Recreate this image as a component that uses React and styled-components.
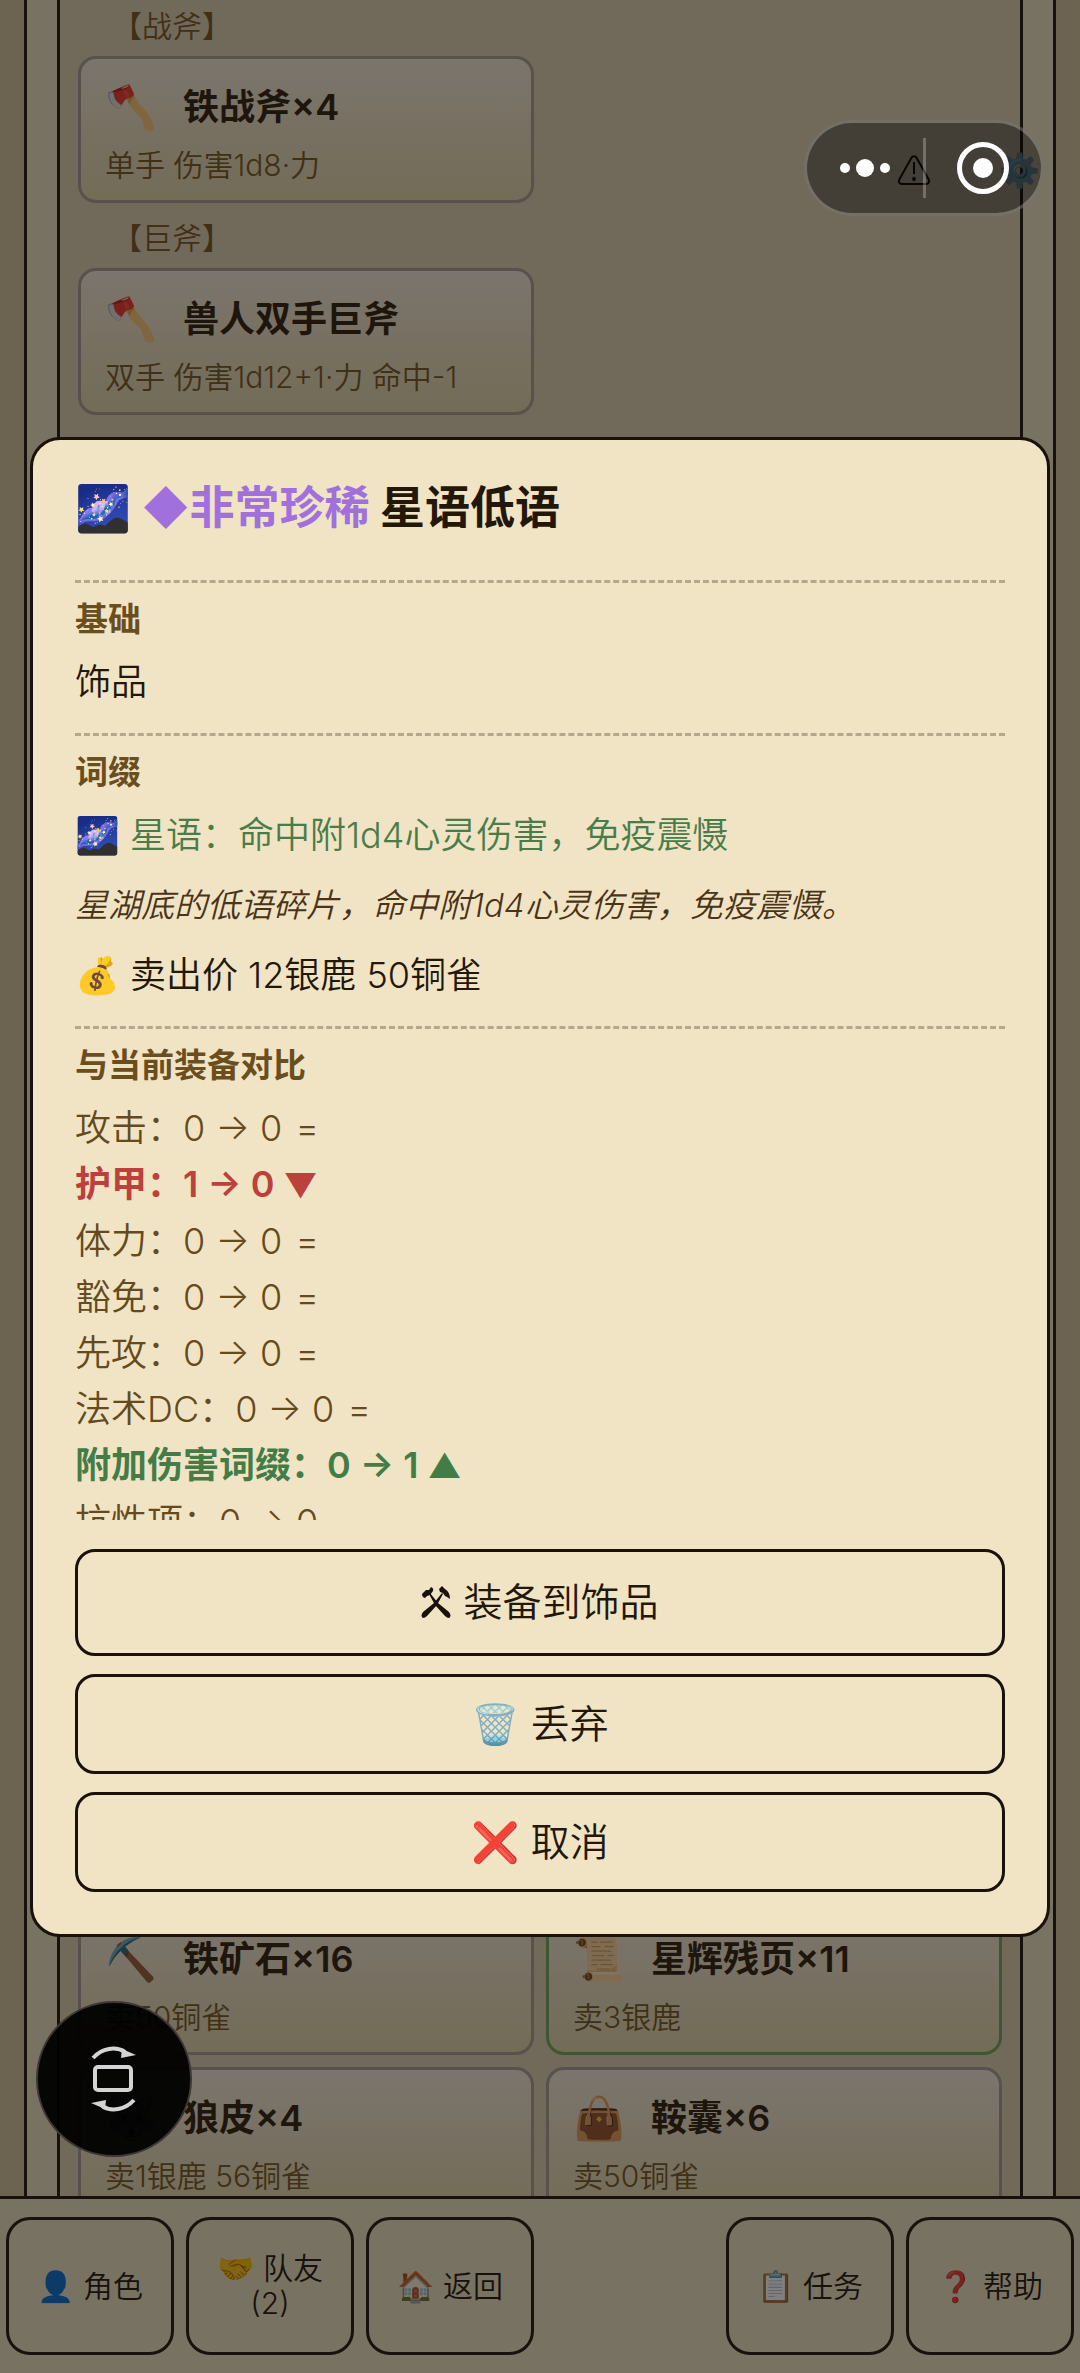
import React from 'react';
import styled, { createGlobalStyle } from 'styled-components';

const cards = [
  { label: '【战斧】', icon: '🪓', name: '铁战斧×4', desc: '单手 伤害1d8·力' },
  { label: '【巨斧】', icon: '🪓', name: '兽人双手巨斧', desc: '双手 伤害1d12+1·力 命中-1' },
];

const materials = [
  { icon: '⛏️', name: '铁矿石×16', desc: '卖50铜雀' },
  { icon: '📜', name: '星辉残页×11', desc: '卖3银鹿', rarity: 'fine' },
  { icon: '🐺', name: '狼皮×4', desc: '卖1银鹿 56铜雀' },
  { icon: '👜', name: '鞍囊×6', desc: '卖50铜雀' },
];

const compare = [
  { name: '攻击', from: 0, to: 0 },
  { name: '护甲', from: 1, to: 0 },
  { name: '体力', from: 0, to: 0 },
  { name: '豁免', from: 0, to: 0 },
  { name: '先攻', from: 0, to: 0 },
  { name: '法术DC', from: 0, to: 0 },
  { name: '附加伤害词缀', from: 0, to: 1 },
  { name: '抗性项', from: 0, to: 0 },
];

const trendOf = ({ from, to }) => {
  if (to > from) return 'up';
  return to < from ? 'down' : 'same';
};

const marks = { up: '▲', down: '▼', same: '=' };

const ItemCard = ({ item }) => (
  <Card $rarity={item.rarity}>
    <CardHead>
      <CardIcon>{item.icon}</CardIcon>
      <CardName>{item.name}</CardName>
    </CardHead>
    <CardDesc>{item.desc}</CardDesc>
  </Card>
);

const WarningIcon = () => (
  <svg width="34" height="34" viewBox="0 0 34 34" fill="none" stroke="#1c140c" strokeWidth="2">
    <path d="M14.6 4.6 2.3 26.5C1.2 28.6 2.4 31 4.8 31h24.4c2.4 0 3.6-2.4 2.5-4.5L19.4 4.6c-1.1-1.9-3.7-1.9-4.8 0Z" />
    <path d="M17 9v12" />
    <circle cx="17" cy="26" r="1" />
  </svg>
);

const HammersIcon = () => (
  <svg width="30" height="32" viewBox="0 0 30 32" fill="#1a120a">
    <path d="M1 8 5 4 8 4 10 1Q13 2 12 5L9 9 6 10 4 12Q1 11 1 8Z" />
    <path d="M18 3 21 0 24 3Q29 6 29 13L26 11 24 10 22 7 19 6Z" />
    <path d="M8 8 9 7 17 17 28 26Q31 30 28 32 26 32 24 30L14 19Z" />
    <path d="M22 8 21 7 13 17 2 26Q-1 30 2 32 4 32 6 30L16 19Z" />
  </svg>
);

const RotateIcon = () => (
  <svg width="46" height="66" viewBox="0 0 46 66" fill="none" stroke="#d4d4d4" strokeWidth="4">
    <rect x="4" y="21" width="36" height="23" rx="3" />
    <path d="M2 12C11 2 25 0 34 6" />
    <path d="M31 3 45 9 30 12Z" fill="#d4d4d4" stroke="none" />
    <path d="M43 54C34 64 20 66 11 60" />
    <path d="M14 63 0 57 15 54Z" fill="#d4d4d4" stroke="none" />
  </svg>
);

const App = () => {
  return (
    <>
      <GlobalStyle />
      <Page>
        <Frame>
          <Inventory>
            <div>
              {cards.map((item) => (
                <div key={item.label}>
                  <GroupLabel>{item.label}</GroupLabel>
                  <CardGrid>
                    <ItemCard item={item} />
                  </CardGrid>
                </div>
              ))}
            </div>
            <MaterialGrid>
              {materials.map((item) => (
                <ItemCard key={item.name} item={item} />
              ))}
            </MaterialGrid>
          </Inventory>
        </Frame>
        <CornerTools>
          <ToolButton aria-label="提示"><WarningIcon /></ToolButton>
          <ToolButton aria-label="设置">⚙️</ToolButton>
        </CornerTools>
        <NavBar>
          <NavButton><span>👤 角色</span></NavButton>
          <NavButton><span>🤝 队友<br />(2)</span></NavButton>
          <NavButton><span>🏠 返回</span></NavButton>
          <NavButton $column={5}><span>📋 任务</span></NavButton>
          <NavButton><span>❓ 帮助</span></NavButton>
        </NavBar>
      </Page>

      <Overlay>
        <Dialog role="dialog" aria-labelledby="item-title">
          <DialogBody>
            <Title id="item-title">
              🌌 <Rarity>◆非常珍稀</Rarity> 星语低语
            </Title>
            <Section>
              <SectionLabel>基础</SectionLabel>
              <Line>饰品</Line>
            </Section>
            <Section>
              <SectionLabel>词缀</SectionLabel>
              <Line $tone="good">🌌 星语：命中附1d4心灵伤害，免疫震慑</Line>
              <Lore>星湖底的低语碎片，命中附1d4心灵伤害，免疫震慑。</Lore>
              <Line>💰 卖出价 12银鹿 50铜雀</Line>
            </Section>
            <Section>
              <SectionLabel>与当前装备对比</SectionLabel>
              <CompareList>
                {compare.map((row) => {
                  const trend = trendOf(row);
                  return (
                    <CompareRow key={row.name} $trend={trend}>
                      {row.name}：{row.from} → {row.to} <Mark $trend={trend}>{marks[trend]}</Mark>
                    </CompareRow>
                  );
                })}
              </CompareList>
            </Section>
          </DialogBody>
          <Actions>
            <ActionButton $tall><HammersIcon />装备到饰品</ActionButton>
            <ActionButton>🗑️ 丢弃</ActionButton>
            <ActionButton>❌ 取消</ActionButton>
          </Actions>
        </Dialog>
      </Overlay>

      <Capsule>
        <CapsuleButton aria-label="更多">
          <svg width="52" height="20" viewBox="0 0 52 20" fill="#fff">
            <circle cx="6" cy="10" r="5" />
            <circle cx="26" cy="10" r="9" />
            <circle cx="46" cy="10" r="5" />
          </svg>
        </CapsuleButton>
        <CapsuleDivider />
        <CapsuleButton aria-label="关闭">
          <svg width="52" height="52" viewBox="0 0 52 52">
            <circle cx="26" cy="26" r="23.500" fill="none" stroke="#fff" strokeWidth="5" />
            <circle cx="26" cy="26" r="10" fill="#fff" />
          </svg>
        </CapsuleButton>
      </Capsule>

      <RotateButton aria-label="旋转屏幕"><RotateIcon /></RotateButton>
    </>
  );
};

const GlobalStyle = createGlobalStyle`
  * {
    box-sizing: border-box;
  }
  body {
    margin: 0;
    color: #221708;
    font-family: Inter, "Noto Sans CJK SC", "Noto Color Emoji", sans-serif;
    font-weight: 350;
  }
  button {
    margin: 0;
    padding: 0;
    color: inherit;
    font-family: inherit;
    font-weight: inherit;
    background: none;
    border: none;
    cursor: pointer;
  }
  svg {
    display: block;
  }
`;

const Page = styled.div`
  position: relative;
  display: flex;
  flex-direction: column;
  height: 100vh;
  overflow: hidden;
  background: #dac6a2;
`;

const Frame = styled.main`
  flex: 1;
  display: flex;
  min-height: 0;
  margin: 0 24px;
  padding: 0 30px;
  background: #f0e4c4;
  border: solid #30241a;
  border-width: 0 3px;
`;

const Inventory = styled.div`
  flex: 1;
  display: flex;
  flex-direction: column;
  justify-content: space-between;
  padding: 0 18px;
  overflow: hidden;
  background: #e2d4b4;
  border: solid #30241a;
  border-width: 0 3px;
`;

const GroupLabel = styled.div`
  padding: 4px 34px 0;
  color: #84602c;
  font-size: 30px;
  line-height: 44px;
`;

const CardGrid = styled.div`
  display: grid;
  grid-template-columns: 1fr 1fr;
  gap: 12px;
  padding: 8px 0 9px;
`;

const MaterialGrid = styled(CardGrid)`
  padding: 0;
  margin-bottom: -18px;
`;

const Card = styled.article`
  height: 147px;
  padding: 20px 24px;
  background: linear-gradient(#f8eada, #e6d8ae);
  border: 3px solid ${({ $rarity }) => ($rarity ? '#7cac68' : '#b0a298')};
  border-radius: 18px;
`;

const CardHead = styled.div`
  display: flex;
  align-items: center;
  gap: 24px;
  height: 56px;
`;

const CardIcon = styled.span`
  width: 54px;
  font-size: 42px;
  line-height: 56px;
`;

const CardName = styled.h3`
  margin: 0;
  color: #3c2c18;
  font-size: 36px;
  font-weight: 600;
  line-height: 56px;
`;

const CardDesc = styled.p`
  margin: 8px 0 0;
  color: #80602c;
  font-size: 30px;
  line-height: 44px;
`;

const CornerTools = styled.div`
  position: absolute;
  top: 148px;
  right: 40px;
  display: flex;
  align-items: center;
  gap: 68px;
`;

const ToolButton = styled.button`
  font-size: 33px;
  line-height: 44px;
`;

const NavBar = styled.nav`
  display: grid;
  grid-template-columns: repeat(6, 1fr);
  gap: 12px;
  padding: 18px 6px;
  background: #f0e4c4;
  border-top: 3px solid #30241a;
`;

const NavButton = styled.button`
  grid-column: ${({ $column }) => $column || 'auto'};
  height: 138px;
  color: #30241a;
  font-size: 30px;
  line-height: 35px;
  border: 3px solid #30241a;
  border-radius: 24px;
`;

const Overlay = styled.div`
  position: fixed;
  inset: 0;
  display: flex;
  align-items: center;
  padding: 0 30px;
  background: rgba(0, 0, 0, 0.5);
`;

const Dialog = styled.section`
  width: 100%;
  padding: 34px 42px 42px;
  background: #f0e4c5;
  border: 3px solid #1a120a;
  border-radius: 30px;
`;

const DialogBody = styled.div`
  max-height: 1046px;
  overflow-y: auto;
  scrollbar-width: none;
`;

const Title = styled.h2`
  margin: 0 0 38px;
  font-size: 45px;
  font-weight: 700;
  line-height: 68px;
`;

const Rarity = styled.span`
  color: #a070dc;
`;

const Section = styled.section`
  margin-top: 21px;
  padding-top: 12px;
  border-top: 3px dashed #b4a88c;
`;

const SectionLabel = styled.h3`
  margin: 0 0 9px;
  color: #6b4e1e;
  font-size: 33px;
  font-weight: 700;
  line-height: 48px;
`;

const Line = styled.p`
  margin: 0;
  color: ${({ $tone }) => ($tone === 'good' ? '#4a7c4a' : 'inherit')};
  font-size: 36px;
  line-height: 60px;
`;

const Lore = styled.p`
  margin: 14px 0;
  color: #4a3418;
  font-size: 33px;
  font-style: italic;
  line-height: 52px;
`;

const CompareList = styled.ul`
  margin: 0;
  padding: 2px 0 0;
  list-style: none;
`;

const trendColors = { up: '#447c48', down: '#bc403c', same: '#644a1c' };

const CompareRow = styled.li`
  color: ${({ $trend }) => trendColors[$trend]};
  font-size: 36px;
  font-weight: ${({ $trend }) => ($trend === 'same' ? 'inherit' : 600)};
  line-height: 56px;
`;

const Mark = styled.span`
  display: inline-block;
  width: 30px;
  font-size: ${({ $trend }) => ($trend === 'same' ? '36px' : '33px')};
  text-align: center;
`;

const Actions = styled.div`
  display: flex;
  flex-direction: column;
  gap: 18px;
  margin-top: 29px;
`;

const ActionButton = styled.button`
  display: flex;
  align-items: center;
  justify-content: center;
  gap: 12px;
  height: ${({ $tall }) => ($tall ? '107px' : '100px')};
  font-size: 39px;
  line-height: 60px;
  border: 3px solid #1a120a;
  border-radius: 20px;
`;

const Capsule = styled.div`
  position: fixed;
  top: 120px;
  right: 36px;
  display: flex;
  align-items: center;
  width: 240px;
  height: 96px;
  background: rgba(0, 0, 0, 0.4);
  border: 3px solid rgba(255, 255, 255, 0.25);
  border-radius: 48px;
`;

const CapsuleButton = styled.button`
  flex: 1;
  display: flex;
  justify-content: center;
`;

const CapsuleDivider = styled.div`
  width: 3px;
  height: 60px;
  background: rgba(255, 255, 255, 0.25);
`;

const RotateButton = styled.button`
  position: fixed;
  left: 36px;
  bottom: 216px;
  display: flex;
  align-items: center;
  justify-content: center;
  width: 156px;
  height: 156px;
  background: rgba(0, 0, 0, 0.95);
  border: 2px solid #3c3833;
  border-radius: 50%;
`;

export default App;
